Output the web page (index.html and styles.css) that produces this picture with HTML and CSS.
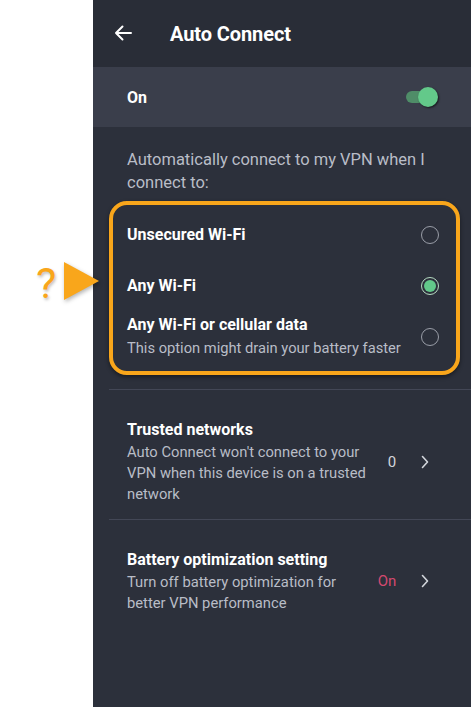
FILE: index.html
```html
<!DOCTYPE html>
<html>
<head>
<meta charset="utf-8">
<link rel="stylesheet" href="styles.css">
</head>
<body>
<div class="page">
  <div class="panel">
    <header class="header">
      <svg class="back" width="20" height="18" viewBox="0 0 20 18"><path d="M18 9H3M9.5 2.5L3 9l6.5 6.5" fill="none" stroke="#fff" stroke-width="2" stroke-linecap="round" stroke-linejoin="round"/></svg>
      <h1 class="title">Auto Connect</h1>
    </header>
    <div class="onrow">
      <span class="onlabel">On</span>
      <span class="toggle"><span class="track"></span><span class="thumb"></span></span>
    </div>
    <p class="intro">Automatically connect to my VPN when I connect to:</p>
    <div class="options">
      <div class="annot">
        <span class="qmark">?</span>
        <svg class="tri" width="36" height="38" viewBox="0 0 36 38"><polygon points="0,0 35,19 0,38" fill="#f9a61b"/></svg>
      </div>
      <div class="opt opt1">
        <span class="optlabel">Unsecured Wi-Fi</span>
        <span class="radio"></span>
      </div>
      <div class="opt opt2">
        <span class="optlabel">Any Wi-Fi</span>
        <span class="radio checked"><span class="dot"></span></span>
      </div>
      <div class="opt opt3">
        <div class="opttext">
          <span class="optlabel">Any Wi-Fi or cellular data</span>
          <span class="optsub">This option might drain your battery faster</span>
        </div>
        <span class="radio"></span>
      </div>
    </div>
    <div class="section">
      <div class="sectext">
        <div class="sectitle">Trusted networks</div>
        <div class="secdesc">Auto Connect won't connect to your VPN when this device is on a trusted network</div>
      </div>
      <span class="value">0</span>
      <svg class="chev" width="8" height="14" viewBox="0 0 8 14"><path d="M1.5 1.5L6.5 7l-5 5.5" fill="none" stroke="#d3d6dc" stroke-width="1.6" stroke-linecap="round" stroke-linejoin="round"/></svg>
    </div>
    <div class="section">
      <div class="sectext">
        <div class="sectitle">Battery optimization setting</div>
        <div class="secdesc">Turn off battery optimization for better VPN performance</div>
      </div>
      <span class="value pink">On</span>
      <svg class="chev" width="8" height="14" viewBox="0 0 8 14"><path d="M1.5 1.5L6.5 7l-5 5.5" fill="none" stroke="#d3d6dc" stroke-width="1.6" stroke-linecap="round" stroke-linejoin="round"/></svg>
    </div>
  </div>
</div>
</body>
</html>
```

FILE: styles.css
```css
html, body {
  margin: 0;
  padding: 0;
  background: #ffffff;
}
body {
  font-family: Roboto, "Liberation Sans", sans-serif;
}
.page {
  display: flex;
  width: 471px;
  height: 707px;
  overflow: hidden;
}
.panel {
  margin-left: 93px;
  width: 378px;
  height: 707px;
  background: #2c303b;
  display: flex;
  flex-direction: column;
}
.header {
  height: 67px;
  background: #292d37;
  display: flex;
  align-items: center;
  padding-left: 20px;
}
.back {
  display: block;
  margin-top: -1px;
}
.title {
  margin: 0 0 0 37px;
  font-size: 20px;
  font-weight: 700;
  color: #ffffff;
  letter-spacing: -0.1px;
}
.onrow {
  height: 60px;
  background: #3a3e4b;
  display: flex;
  align-items: center;
  justify-content: space-between;
  padding: 0 33px 0 34px;
}
.onlabel {
  color: #ffffff;
  font-size: 16px;
  font-weight: 700;
}
.toggle {
  position: relative;
  width: 32px;
  height: 20px;
  display: flex;
  align-items: center;
}
.track {
  width: 26px;
  height: 12px;
  border-radius: 6px;
  background: #4f8d68;
}
.thumb {
  position: absolute;
  right: 0;
  top: 0;
  width: 20px;
  height: 20px;
  border-radius: 50%;
  background: #63c98a;
  box-shadow: 1px 1px 2px rgba(0,0,0,0.6);
}
.intro {
  margin: 21px 30px 7px 34px;
  font-size: 16.5px;
  line-height: 23px;
  color: #b9bdc7;
}
.options {
  position: relative;
  margin: 0 11px 0 16px;
  border: 4px solid #f9a61b;
  border-radius: 18px;
  padding: 6px 17px 11px 14px;
  display: flex;
  flex-direction: column;
  gap: 3px;
  box-shadow: 0 2px 4px rgba(0,0,0,0.45);
}
.annot {
  position: absolute;
  left: -77px;
  top: 53px;
  display: flex;
  align-items: center;
  gap: 8px;
}
.qmark {
  font-family: Roboto, sans-serif;
  font-size: 43px;
  line-height: 42px;
  color: #f9a61b;
  margin-top: 4px;
  text-shadow: 1px 2px 3px rgba(0,0,0,0.25);
}
.tri {
  display: block;
  filter: drop-shadow(1px 2px 2px rgba(0,0,0,0.3));
}
.opt {
  display: flex;
  align-items: center;
  justify-content: space-between;
}
.opt1, .opt2 {
  height: 48px;
}
.opttext {
  display: flex;
  flex-direction: column;
}
.optlabel {
  color: #ffffff;
  font-size: 16px;
  font-weight: 700;
  line-height: 24px;
}
.optsub {
  color: #b9bdc7;
  font-size: 14.7px;
  line-height: 23px;
}
.radio {
  width: 16px;
  height: 16px;
  border: 1.5px solid #9a9ea8;
  border-radius: 50%;
  display: flex;
  align-items: center;
  justify-content: center;
  flex: none;
}
.radio.checked {
  border-color: #b7dcc3;
}
.dot {
  width: 12px;
  height: 12px;
  border-radius: 50%;
  background: #62c98a;
}
.section {
  margin-left: 16px;
  border-top: 1.5px solid #434756;
  display: flex;
  align-items: center;
  padding: 28px 0 14px 18px;
}
.options + .section {
  margin-top: 14px;
}
.sectext {
  width: 245px;
  display: flex;
  flex-direction: column;
}
.sectitle {
  color: #ffffff;
  font-size: 16px;
  font-weight: 700;
  line-height: 24px;
}
.secdesc {
  color: #b9bdc7;
  font-size: 14.75px;
  line-height: 21px;
}
.value {
  width: 40px;
  text-align: center;
  color: #d3d6dc;
  font-size: 15px;
}
.value.pink {
  color: #d4496f;
  margin-left: -5px;
  margin-right: 5px;
}
.chev {
  display: block;
  margin-left: 9px;
}
```
